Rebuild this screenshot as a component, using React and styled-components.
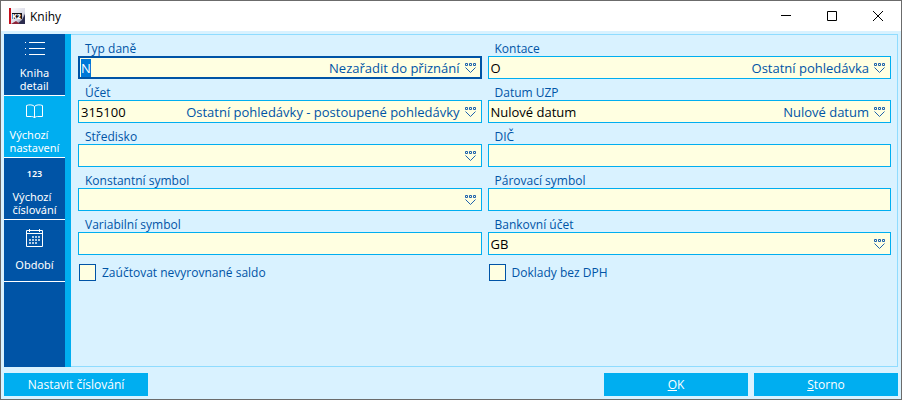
import React, { useEffect, useRef } from 'react';
import styled, { createGlobalStyle } from 'styled-components';

const GlobalStyle = createGlobalStyle`
  * {
    box-sizing: border-box;
  }

  body {
    margin: 0;
    font-family: 'Open Sans', 'Noto Sans', sans-serif;
    font-size: 12px;
    color: #0054a6;
  }

  button, input {
    font-family: inherit;
    font-size: inherit;
    color: inherit;
  }
`;

const Window = styled.div`
  display: flex;
  flex-direction: column;
  min-height: 100vh;
  border: 1px solid #6b6b6b;
  background-color: #d9f2ff;
`;

const TitleBar = styled.header`
  display: flex;
  align-items: center;
  height: 30px;
  padding-left: 8px;
  background-color: white;
  color: black;
`;

const Title = styled.h1`
  flex: 1;
  margin: 0 0 0 5px;
  font-size: 12px;
  font-weight: normal;
`;

const WindowButton = styled.button`
  display: flex;
  align-items: center;
  justify-content: center;
  width: 46px;
  height: 28px;
  padding: 0;
  border: none;
  background: none;
`;

const Content = styled.div`
  display: flex;
  flex: 1;
  padding: 3px 3px 0;
`;

const Sidebar = styled.nav`
  flex: none;
  width: 67px;
  border-right: 6px solid #00aef0;
  background-color: #0054a6;
`;

const Tab = styled.button`
  display: flex;
  flex-direction: column;
  align-items: center;
  width: 100%;
  height: 62px;
  padding: 5px 0 0;
  border: none;
  border-bottom: 1px solid white;
  background-color: ${props => props.$active ? '#00aef0' : '#0054a6'};
  color: white;
  font-family: 'Noto Sans', sans-serif;
  font-size: 11px;
  line-height: 13px;
  text-align: left;
`;

const TabIcon = styled.span`
  display: flex;
  align-items: center;
  justify-content: center;
  height: 20px;
  font-size: 9px;
  font-weight: 600;
`;

const TabLabel = styled.span`
  display: flex;
  flex: 1;
  align-items: center;
  padding-top: 3px;
  white-space: pre-line;
`;

const Panel = styled.main`
  flex: 1;
  padding: 7px 6px 7px 7px;
  border: 1px solid #8fdcff;
  border-left: none;
`;

const Form = styled.form`
  display: grid;
  grid-template-columns: 1fr 1fr;
  column-gap: 6px;
`;

const Field = styled.div`
  min-width: 0;
  height: 44px;
`;

const Label = styled.label`
  display: block;
  padding-left: 7px;
  line-height: 14px;
`;

const InputBox = styled.div`
  display: flex;
  align-items: center;
  height: 23px;
  padding: 1px 4px 1px 2px;
  border: 1px solid #00aef0;
  background-color: #ffffe1;
  font-size: 13px;

  &:focus-within {
    padding: 0 3px 0 1px;
    border: 2px solid #0054a6;
  }
`;

const Input = styled.input`
  flex: 1;
  min-width: 0;
  width: 20px;
  height: 18px;
  padding: 0;
  border: none;
  outline: none;
  background: none;
  color: black;
  caret-color: #f08030;

  &::selection {
    background-color: #0078d7;
    color: white;
  }
`;

const Description = styled.span`
  white-space: nowrap;
`;

const PickButton = styled.button`
  display: flex;
  margin-left: 5px;
  padding: 0;
  border: none;
  background: none;
`;

const CheckLabel = styled.label`
  display: flex;
  align-items: center;
  gap: 6px;
  height: 19px;
  padding: 2px 0 0 1px;
`;

const Checkbox = styled.input`
  appearance: none;
  width: 17px;
  height: 17px;
  margin: 0;
  border: 1px solid #0054a6;
  background-color: #ffffe1;

  &:checked {
    background-color: #0054a6;
  }
`;

const Footer = styled.footer`
  display: flex;
  gap: 6px;
  padding: 6px 3px 3px;
`;

const Spacer = styled.div`
  flex: 1;
`;

const ActionButton = styled.button`
  width: 144px;
  height: 23px;
  padding: 0;
  border: none;
  background-color: #00aef0;
  color: white;
`;

const LogoText = styled.text`
  fill: white;
  font-size: 7px;
  font-weight: 800;
`;

function Logo() {
  return (
    <svg width="16" height="16" viewBox="0 0 16 16" aria-hidden="true">
      <defs>
        <linearGradient id="logo-fade" x1="0" y1="0" x2="1" y2="1">
          <stop offset="0" stopColor="#ffffff" />
          <stop offset="0.6" stopColor="#dcdce8" />
          <stop offset="1" stopColor="#5a5a7c" />
        </linearGradient>
      </defs>
      <path d="M0 0h16v16H0z" fill="url(#logo-fade)" />
      <path d="M0 0h2v16H0z" fill="#c4101c" />
      <path d="M16 6v10H8l5-4z" fill="#2c2c4e" />
      <path d="M2 16l5-3 4 3z" fill="#8c2438" />
      <path d="M3 5h10v6H3z" fill="#101018" />
      <LogoText x="3" y="11">K2</LogoText>
    </svg>
  );
}

function ListIcon() {
  return (
    <svg width="20" height="14" viewBox="0 0 20 14" fill="none" stroke="white" aria-hidden="true">
      <path d="M4 .5h16M4 6.500h16M4 12.500h16" />
      <path d="M0 .5h2M0 6.500h2M0 12.500h2" strokeDasharray="1 1" />
    </svg>
  );
}

function BookIcon() {
  return (
    <svg width="17" height="16" viewBox="0 0 17 16" fill="none" stroke="white" aria-hidden="true">
      <path d="M8.500 3.500C7 1.500 3 1.500.5 2.500v11h5c1.500 0 2.500.5 3 1.500.5-1 1.500-1.500 3-1.500h5v-11C14 1.500 10 1.500 8.500 3.500zM8.500 3.500V15" />
    </svg>
  );
}

function CalendarIcon() {
  return (
    <svg width="17" height="24" viewBox="0 -6 17 24" fill="none" stroke="white" aria-hidden="true">
      <path d="M.5 1.500h16v16H.5zM0 4.500h17M3.500 0v3M13.500 0v3" />
      <path d="M6 8h8M3 11h11M3 14h8" strokeWidth="2" strokeDasharray="2 1" opacity="0.7" />
    </svg>
  );
}

function PickIcon() {
  return (
    <svg width="12" height="11" viewBox="0 0 12 11" fill="none" stroke="#1f63ad" aria-hidden="true">
      <path d="M.5 1.500h2v2h-2zM4.500 1.500h2v2h-2zM8.500 1.500h2v2h-2z" />
      <path d="M.5 5.500l5 5 5-5" />
    </svg>
  );
}

const tabs = [
  { label: 'Kniha\ndetail', icon: <ListIcon /> },
  { label: 'Výchozí\nnastavení', icon: <BookIcon />, active: true },
  { label: 'Výchozí\nčíslování', icon: '123' },
  { label: 'Období', icon: <CalendarIcon /> },
];

const fields = [
  { id: 'typ-dane', label: 'Typ daně', value: 'N', description: 'Nezařadit do přiznání', pick: true, focused: true },
  { id: 'kontace', label: 'Kontace', value: 'O', description: 'Ostatní pohledávka', pick: true },
  { id: 'ucet', label: 'Účet', value: '315100', description: 'Ostatní pohledávky - postoupené pohledávky', pick: true },
  { id: 'datum-uzp', label: 'Datum UZP', value: 'Nulové datum', description: 'Nulové datum', pick: true },
  { id: 'stredisko', label: 'Středisko', pick: true },
  { id: 'dic', label: 'DIČ' },
  { id: 'konstantni-symbol', label: 'Konstantní symbol', pick: true },
  { id: 'parovaci-symbol', label: 'Párovací symbol' },
  { id: 'variabilni-symbol', label: 'Variabilní symbol' },
  { id: 'bankovni-ucet', label: 'Bankovní účet', value: 'GB', pick: true },
];

function TextField({ id, label, value = '', description, pick, focused }) {
  const input = useRef(null);

  useEffect(() => {
    if (focused) {
      input.current.focus();
      input.current.select();
    }
  }, [focused]);

  return (
    <Field>
      <Label htmlFor={id}>{label}</Label>
      <InputBox>
        <Input id={id} ref={input} defaultValue={value} autoComplete="off" spellCheck={false} />
        {description && <Description>{description}</Description>}
        {pick && (
          <PickButton type="button" aria-label={'Vybrat: ' + label}>
            <PickIcon />
          </PickButton>
        )}
      </InputBox>
    </Field>
  );
}

function App() {
  return (
    <>
      <GlobalStyle />
      <Window>
        <TitleBar>
          <Logo />
          <Title>Knihy</Title>
          <WindowButton aria-label="Minimalizovat">
            <svg width="10" height="10" stroke="black"><path d="M0 4.500h10" /></svg>
          </WindowButton>
          <WindowButton aria-label="Maximalizovat">
            <svg width="10" height="10" fill="none" stroke="black"><path d="M.5.5h9v9h-9z" /></svg>
          </WindowButton>
          <WindowButton aria-label="Zavřít">
            <svg width="10" height="10" stroke="black"><path d="M0 0l10 10M10 0L0 10" /></svg>
          </WindowButton>
        </TitleBar>

        <Content>
          <Sidebar>
            {tabs.map(tab => (
              <Tab key={tab.label} $active={tab.active}>
                <TabIcon>{tab.icon}</TabIcon>
                <TabLabel>{tab.label}</TabLabel>
              </Tab>
            ))}
          </Sidebar>
          <Panel>
            <Form>
              {fields.map(field => <TextField key={field.id} {...field} />)}
              <CheckLabel>
                <Checkbox type="checkbox" />
                Zaúčtovat nevyrovnané saldo
              </CheckLabel>
              <CheckLabel>
                <Checkbox type="checkbox" />
                Doklady bez DPH
              </CheckLabel>
            </Form>
          </Panel>
        </Content>

        <Footer>
          <ActionButton>Nastavit číslování</ActionButton>
          <Spacer />
          <ActionButton><u>O</u>K</ActionButton>
          <ActionButton><u>S</u>torno</ActionButton>
        </Footer>
      </Window>
    </>
  );
}

export default App;
